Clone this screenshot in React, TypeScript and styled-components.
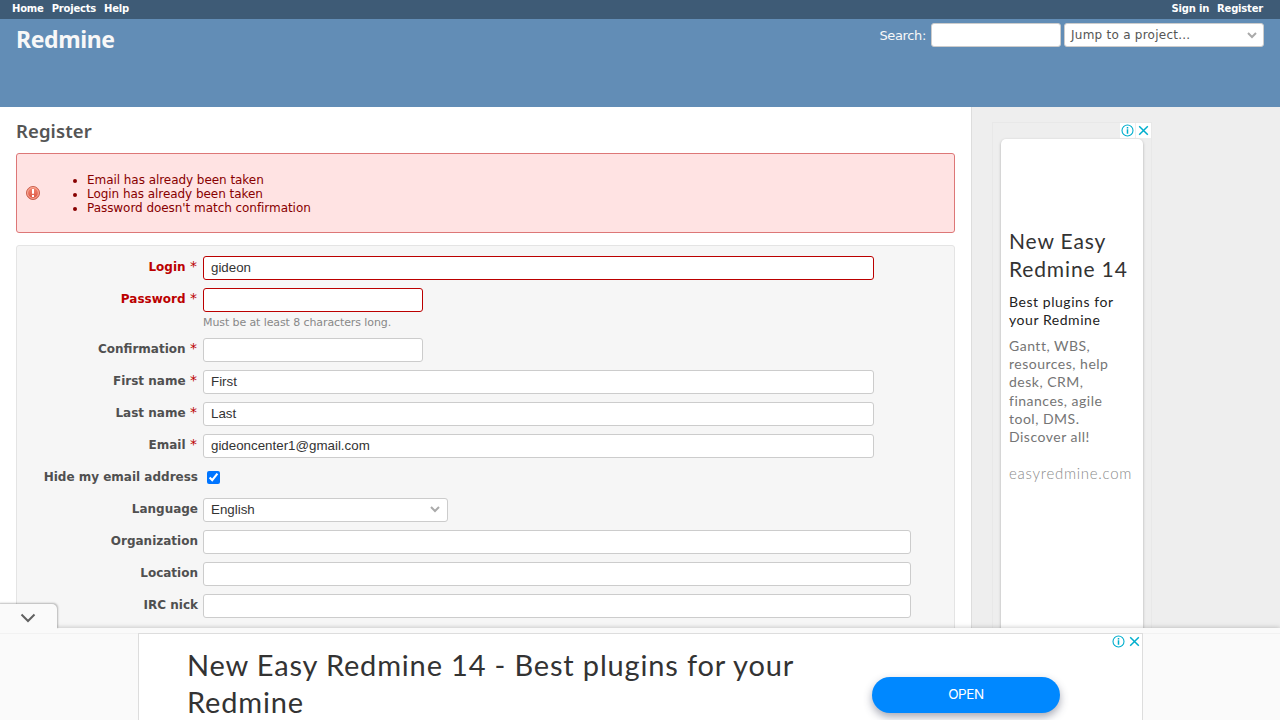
import React from "react";
import styled, { createGlobalStyle, css } from "styled-components";

const Global = createGlobalStyle`
  * { box-sizing: border-box; }
  body { margin: 0; overflow: hidden; font-family: "DejaVu Sans", Verdana, sans-serif; font-size: 12px; color: #333; background: #fff; }
`;

const Page = styled.div`
  position: relative;
  height: 720px;
  overflow: hidden;
  display: flex;
  flex-direction: column;
`;

const TopMenu = styled.nav`
  height: 19px;
  flex: none;
  background: #3e5b76;
  display: flex;
  justify-content: space-between;
  padding: 2px 17px 0 12px;
`;

const MenuGroup = styled.div`
  display: flex;
  gap: 8px;
`;

const MenuLink = styled.a`
  color: #fff;
  font-size: 10px;
  line-height: 13px;
  font-weight: bold;
  white-space: nowrap;
  letter-spacing: -0.2px;
`;

const Header = styled.header`
  height: 88px;
  flex: none;
  background: #628db6;
  display: flex;
  justify-content: space-between;
  align-items: flex-start;
  padding: 4px 16px 0;
`;

const SiteTitle = styled.h1`
  margin: 0;
  font: 700 23px/32px "Noto Sans", sans-serif;
  color: #f8f8f8;
  letter-spacing: -0.4px;
`;

const QuickSearch = styled.div`
  display: flex;
  color: #f8f8f8;
`;

const SearchLabel = styled.label`
  font-size: 13px;
  line-height: 26px;
  height: 24px;
  margin-right: 5px;
  letter-spacing: -0.35px;
`;

const boxed = css`
  height: 24px;
  border: 1px solid #ccc;
  border-radius: 3px;
  background: #fff;
  color: #333;
  display: block;
  margin: 0;
  outline: none;
`;

const Field = styled.input<{ $w: number; $invalid?: boolean }>`
  ${boxed}
  width: ${(p) => p.$w}px;
  padding: 0 7px 1px;
  font: 13.333px "Liberation Sans", Arial, sans-serif;
  ${(p) => p.$invalid && css`border-color: #b00;`}
`;

const Jump = styled.div`
  ${boxed}
  width: 200px;
  margin-left: 3px;
  padding: 0 6px;
  display: flex;
  align-items: center;
  justify-content: space-between;
  color: #555;
  font-size: 12px;
  letter-spacing: 0.25px;
`;

const Picker = styled.div`
  ${boxed}
  width: 245px;
  padding: 0 7px 1px;
  display: flex;
  align-items: center;
  justify-content: space-between;
  font: 13.333px "Liberation Sans", Arial, sans-serif;
`;

const Columns = styled.div`
  flex: 1;
  display: flex;
  min-height: 0;
`;

const Content = styled.main`
  width: 971px;
  flex: none;
  padding: 0 16px;
`;

const Title = styled.h2`
  margin: 11px 0 9px;
  font: 600 18.5px/26px "Noto Sans", sans-serif;
  color: #555;
  letter-spacing: 0.1px;
`;

const ErrorBox = styled.section`
  height: 80px;
  border: 1px solid #dd7777;
  border-radius: 3px;
  background: #ffe3e3;
  color: #880000;
  display: flex;
  align-items: center;
  padding-left: 9px;
  margin-bottom: 12px;
`;

const ErrorList = styled.ul`
  margin: 2px 0 0 47px;
  padding: 0;
  line-height: 14px;
  font-size: 12px;
  letter-spacing: -0.05px;
`;

const FormBox = styled.form`
  height: 440px;
  border: 1px solid #e4e4e4;
  border-radius: 3px;
  background: #f6f6f6;
  padding-top: 10px;
  display: flex;
  flex-direction: column;
  gap: 8px;
`;

const Row = styled.div`
  display: grid;
  grid-template-columns: 181px auto;
  justify-content: start;
  column-gap: 5px;
`;

const Label = styled.label<{ $invalid?: boolean; $required?: boolean }>`
  text-align: right;
  font-weight: bold;
  font-size: 12px;
  line-height: 22px;
  white-space: nowrap;
  color: ${(p) => (p.$invalid ? "#b00" : "#505050")};
  padding-right: ${(p) => (p.$required ? 1 : 0)}px;
`;

const Star = styled.span`
  color: #b00;
  font-weight: normal;
  font-size: 14px;
  line-height: 1;
`;

const Hint = styled.em`
  display: block;
  font-style: normal;
  font-size: 11px;
  line-height: 18px;
  height: 18px;
  padding-top: 2px;
  color: #888;
  letter-spacing: -0.1px;
`;

const Check = styled.input`
  width: 13px;
  height: 13px;
  margin: 5px 4px 6px;
`;

const Sidebar = styled.aside`
  flex: 1;
  border-left: 1px solid #ddd;
  background: #eee;
  padding: 15px 0 0 20px;
`;

const AdFrame = styled.div`
  width: 160px;
  height: 600px;
  border: 1px solid #e8e8e8;
  display: flex;
  flex-direction: column;
`;

const AdBadges = styled.div`
  display: flex;
  gap: 1px;
  align-self: flex-end;
`;

const Badge = styled.span`
  width: 15px;
  height: 15px;
  background: #fff;
  display: grid;
  place-items: center;
`;

const AdCard = styled.article`
  flex: 1;
  margin: 1px 8px 0 8px;
  width: 142px;
  background: #fff;
  border-radius: 5px 5px 0 0;
  box-shadow: 0 1px 3px rgba(0, 0, 0, 0.28);
  padding: 88px 0 0 8px;
  font-family: Lato, sans-serif;
  white-space: nowrap;
`;

const AdHeading = styled.h3`
  margin: 0;
  font-size: 21px;
  line-height: 28px;
  font-weight: 400;
  color: #333;
  letter-spacing: 0.85px;
`;

const AdSub = styled.p`
  margin: 10px 0 0;
  font-size: 14px;
  line-height: 18px;
  color: #222;
  letter-spacing: 0.55px;
`;

const AdText = styled.p`
  margin: 8px 0 0;
  font-size: 14px;
  line-height: 18.2px;
  color: #757575;
  letter-spacing: 0.5px;
`;

const AdDomain = styled.p`
  margin: 17px 0 0;
  font-size: 15px;
  line-height: 20px;
  color: #8a8a8a;
  font-weight: 300;
  letter-spacing: 0.73px;
`;

const Anchor = styled.div`
  position: absolute;
  left: 0;
  right: 0;
  bottom: 0;
  height: 92px;
  background: linear-gradient(#fafafa 5px, #f2f2f2 5px, #f2f2f2 6px, #fafafa 6px);
  box-shadow: 0 0 5px rgba(0, 0, 0, 0.25);
  display: flex;
  flex-direction: column;
  align-items: center;
  padding-top: 5px;
`;

const CollapseTab = styled.button`
  position: absolute;
  left: -2px;
  top: -24px;
  width: 59px;
  height: 25px;
  padding: 3px 0 0;
  border: 0;
  border-radius: 0 5px 0 0;
  background: #fafafa;
  box-shadow: 1px -1px 2px rgba(0, 0, 0, 0.26);
  clip-path: inset(-5px -5px 0 0);
  display: grid;
  place-items: center;
`;

const Banner = styled.article`
  width: 1005px;
  height: 87px;
  margin-left: 1px;
  border: 1px solid #ddd;
  border-bottom: 0;
  background: #fff;
  display: flex;
  align-items: flex-start;
`;

const BannerTitle = styled.h3`
  margin: 12px 0 0 48px;
  width: 685px;
  flex: none;
  font: 400 29px/37px Lato, sans-serif;
  letter-spacing: 0.83px;
  color: #333;
`;

const OpenButton = styled.button`
  margin: 43px 0 0;
  width: 188px;
  height: 36px;
  flex: none;
  border: 0;
  border-radius: 18px;
  background: #0088ff;
  box-shadow: 0 4px 8px rgba(60, 64, 90, 0.45);
  color: #fff;
  font: 400 13.5px Inter, sans-serif;
  letter-spacing: -0.4px;
  padding: 0 0 2px;
`;

const BannerBadges = styled(AdBadges)`
  margin-left: auto;
  align-self: flex-start;
`;

const Chevron = () => (
  <svg width="10" height="7" viewBox="0 0 10 7" fill="none" stroke="#aaa" strokeWidth="2">
    <path d="M1 1l4 4 4-4" />
  </svg>
);

const InfoIcon = () => (
  <svg width="13" height="13" viewBox="0 0 13 13" fill="none" stroke="#00aecd">
    <circle cx="6.5" cy="6.5" r="5.5" strokeWidth="1.1" />
    <path d="M6.5 5.3v4.500M6.500 3v1.400" strokeWidth="1.5" />
  </svg>
);

const CloseIcon = () => (
  <svg width="13" height="13" viewBox="0 0 13 13" fill="none" stroke="#00aecd" strokeWidth="1.5">
    <path d="M2.200 2.200l8.600 8.600M10.800 2.200l-8.600 8.600" />
  </svg>
);

const ErrorIcon = () => (
  <svg width="14" height="14" viewBox="0 0 14 14">
    <defs>
      <linearGradient id="err" x1="0" y1="0" x2="0" y2="1">
        <stop offset="0" stopColor="#f58a74" />
        <stop offset="1" stopColor="#d9513f" />
      </linearGradient>
    </defs>
    <circle cx="7" cy="7" r="6.5" fill="url(#err)" stroke="#c9614f" />
    <circle cx="7" cy="7" r="5.4" fill="none" stroke="#f9b3a2" strokeWidth="0.9" />
    <path d="M7 3v4.800M7 9v2" stroke="#fff" strokeWidth="2" />
  </svg>
);

interface FieldRow {
  label: string;
  width: number;
  value?: string;
  required?: boolean;
  invalid?: boolean;
  hint?: string;
  type?: string;
}

const accountFields: FieldRow[] = [
  { label: "Login", width: 671, value: "gideon", required: true, invalid: true },
  { label: "Password", width: 220, required: true, invalid: true, type: "password", hint: "Must be at least 8 characters long." },
  { label: "Confirmation", width: 220, required: true, type: "password" },
  { label: "First name", width: 671, value: "First", required: true },
  { label: "Last name", width: 671, value: "Last", required: true },
  { label: "Email", width: 671, value: "gideoncenter1@gmail.com", required: true },
];

const extraFields: FieldRow[] = [
  { label: "Organization", width: 708 },
  { label: "Location", width: 708 },
  { label: "IRC nick", width: 708 },
];

const TextRow = ({ label, width, value, required, invalid, hint, type }: FieldRow) => (
  <Row>
    <Label $invalid={invalid} $required={required}>
      {label}
      {required && <Star> *</Star>}
    </Label>
    <div>
      <Field $w={width} $invalid={invalid} type={type || "text"} defaultValue={value} />
      {hint && <Hint>{hint}</Hint>}
    </div>
  </Row>
);

export default function App() {
  return (
    <>
      <Global />
      <Page>
        <TopMenu>
          <MenuGroup>
            <MenuLink>Home</MenuLink>
            <MenuLink>Projects</MenuLink>
            <MenuLink>Help</MenuLink>
          </MenuGroup>
          <MenuGroup>
            <MenuLink>Sign in</MenuLink>
            <MenuLink>Register</MenuLink>
          </MenuGroup>
        </TopMenu>
        <Header>
          <SiteTitle>Redmine</SiteTitle>
          <QuickSearch>
            <SearchLabel>Search:</SearchLabel>
            <Field $w={130} type="text" />
            <Jump>
              Jump to a project...
              <Chevron />
            </Jump>
          </QuickSearch>
        </Header>
        <Columns>
          <Content>
            <Title>Register</Title>
            <ErrorBox>
              <ErrorIcon />
              <ErrorList>
                <li>Email has already been taken</li>
                <li>Login has already been taken</li>
                <li>Password doesn't match confirmation</li>
              </ErrorList>
            </ErrorBox>
            <FormBox>
              {accountFields.map((f) => (
                <TextRow key={f.label} {...f} />
              ))}
              <Row>
                <Label>Hide my email address</Label>
                <Check type="checkbox" defaultChecked />
              </Row>
              <Row>
                <Label>Language</Label>
                <Picker>
                  English
                  <Chevron />
                </Picker>
              </Row>
              {extraFields.map((f) => (
                <TextRow key={f.label} {...f} />
              ))}
            </FormBox>
          </Content>
          <Sidebar>
            <AdFrame>
              <AdBadges>
                <Badge><InfoIcon /></Badge>
                <Badge><CloseIcon /></Badge>
              </AdBadges>
              <AdCard>
                <AdHeading>New Easy<br />Redmine 14</AdHeading>
                <AdSub>Best plugins for<br />your Redmine</AdSub>
                <AdText>
                  Gantt, WBS,<br />resources, help<br />desk, CRM,<br />finances, agile<br />tool, DMS.<br />Discover all!
                </AdText>
                <AdDomain>easyredmine.com</AdDomain>
              </AdCard>
            </AdFrame>
          </Sidebar>
        </Columns>
        <Anchor>
          <CollapseTab aria-label="Collapse">
            <svg width="16" height="10" viewBox="0 0 16 10" fill="none" stroke="#616161" strokeWidth="2">
              <path d="M1.500 1.500L8 8l6.500-6.500" />
            </svg>
          </CollapseTab>
          <Banner>
            <BannerTitle>New Easy Redmine 14 - Best plugins for your Redmine</BannerTitle>
            <OpenButton>OPEN</OpenButton>
            <BannerBadges>
              <Badge><InfoIcon /></Badge>
              <Badge><CloseIcon /></Badge>
            </BannerBadges>
          </Banner>
        </Anchor>
      </Page>
    </>
  );
}
